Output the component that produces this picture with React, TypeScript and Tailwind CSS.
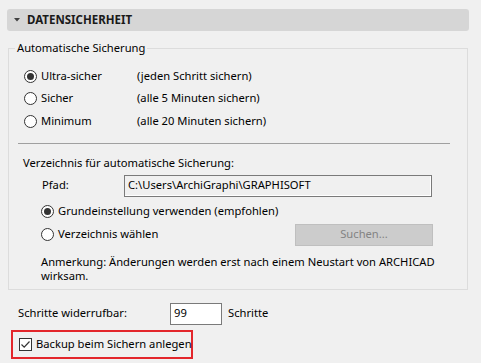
import React from "react";

function Radio({ checked }: { checked?: boolean }) {
  return (
    <span className="flex h-[13px] w-[13px] shrink-0 items-center justify-center rounded-full border border-[#333333] bg-white">
      {checked && <span className="h-[7px] w-[7px] rounded-full bg-[#333333]" />}
    </span>
  );
}

function Checkbox({ checked }: { checked?: boolean }) {
  return (
    <span className="flex h-[13px] w-[13px] shrink-0 items-center justify-center border border-[#333333] bg-white">
      {checked && (
        <svg width="11" height="11" viewBox="0 0 11 11" aria-hidden="true">
          <path d="M1.5 5.5 L4.2 8.2 L9.5 2.5" fill="none" stroke="#333333" strokeWidth="1.2" />
        </svg>
      )}
    </span>
  );
}

const modes = [
  { label: "Ultra-sicher", hint: "(jeden Schritt sichern)", checked: true },
  { label: "Sicher", hint: "(alle 5 Minuten sichern)" },
  { label: "Minimum", hint: "(alle 20 Minuten sichern)" },
];

export default function App() {
  return (
    <div
      className="h-[363px] w-[481px] overflow-hidden bg-[#f0f0f0] pl-[7px] pt-[9px] text-[11.2px] text-black"
      style={{ fontFamily: '"Noto Sans", "Open Sans", sans-serif' }}
    >
      {/* section header */}
      <div className="flex h-[22px] w-[462px] items-center rounded-[3px] bg-[#d6d6d6]">
        <svg className="ml-[7px]" width="6" height="4" viewBox="0 0 6 4" aria-hidden="true">
          <path d="M0 0 H6 L3 3.5 Z" fill="#404040" />
        </svg>
        <span className="ml-[7px] text-[11.5px] font-bold text-[#1a1a1a]">DATENSICHERHEIT</span>
      </div>

      <fieldset className="ml-[1px] mt-[9px] w-[460px] border border-[#dcdcdc] pb-[6px]">
        <legend className="ml-[6px] px-[2px] leading-[16px]">Automatische Sicherung</legend>

        <div className="mt-[9px] flex flex-col">
          {modes.map((m) => (
            <div key={m.label} className="flex h-[22.5px] items-center pl-[15px]">
              <Radio checked={m.checked} />
              <span className="ml-[4px] w-[96px]">{m.label}</span>
              <span>{m.hint}</span>
            </div>
          ))}
        </div>

        <div className="ml-[9px] mt-[10px] h-px w-[432px] bg-[#a0a0a0]" />

        <div className="ml-[14px] mt-[11px] leading-[16px]">Verzeichnis für automatische Sicherung:</div>

        <div className="mt-[4px] flex items-center pl-[33px]">
          <span className="w-[82px]">Pfad:</span>
          <div className="flex h-[22px] w-[308px] items-center border border-[#7a7a7a] bg-[#f0f0f0] pl-[3px] shadow-[inset_-1px_-1px_0_#ffffff]">
            C:\Users\ArchiGraphi\GRAPHISOFT
          </div>
        </div>

        <div className="mt-[4px] flex h-[22px] items-center pl-[32px]">
          <Radio checked />
          <span className="ml-[4px]">Grundeinstellung verwenden (empfohlen)</span>
        </div>

        <div className="mt-[1px] flex h-[22px] items-center pl-[32px]">
          <Radio />
          <span className="ml-[4px]">Verzeichnis wählen</span>
          <div className="ml-auto mr-[34px] flex h-[22px] w-[138px] items-center justify-center border border-[#bfbfbf] bg-[#cccccc] text-[#838383]">
            Suchen...
          </div>
        </div>

        <p className="ml-[32px] mt-[9px] leading-[14px]">
          Anmerkung: Änderungen werden erst nach einem Neustart von ARCHICAD
          <br />
          wirksam.
        </p>
      </fieldset>

      <div className="mt-[13px] flex items-center pl-[11px]">
        <span className="w-[152px]">Schritte widerrufbar:</span>
        <div className="flex h-[22px] w-[52px] items-center border border-[#7a7a7a] bg-white pl-[3px]">99</div>
        <span className="ml-[6px]">Schritte</span>
      </div>

      <div className="ml-[4px] mt-[5px] flex h-[29px] w-[182px] items-center border-2 border-[#e3262b] pl-[6px]">
        <Checkbox checked />
        <span className="ml-[4px] whitespace-nowrap">Backup beim Sichern anlegen</span>
      </div>
    </div>
  );
}
